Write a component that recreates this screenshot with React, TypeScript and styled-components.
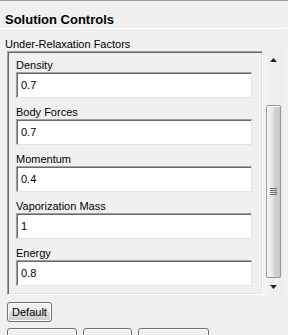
import React from "react";
import styled, { createGlobalStyle } from "styled-components";

const Global = createGlobalStyle`
  html, body { margin: 0; padding: 0; overflow: hidden; background: #f0f0f0; }
  body { font-family: "Liberation Sans", Arial, sans-serif; font-size: 11px; color: #000; }
`;

const Page = styled.div`
  width: 288px;
  height: 335px;
  overflow: hidden;
  box-sizing: border-box;
  border-top: 1px solid #a0a0a0;
  background: #f0f0f0;
  display: flex;
  flex-direction: column;
`;

const Title = styled.div`
  font-weight: bold;
  font-size: 13px;
  line-height: 16px;
  padding: 11px 0 0 5px;
  height: 16px;
`;

const Separator = styled.div`
  width: 286px;
  height: 1px;
  background: #a0a0a0;
  border-bottom: 1px solid #ffffff;
`;

const SectionLabel = styled.div`
  margin: 9px 0 0 5px;
  line-height: 13px;
  height: 13px;
`;

const Row = styled.div`
  display: flex;
  margin-left: 7px;
  height: 246px;
  gap: 2px;
`;

const GroupBox = styled.div`
  width: 256px;
  box-sizing: border-box;
  border-style: solid;
  border-width: 1px;
  border-color: #a0a0a0 #ffffff #ffffff #a0a0a0;
  box-shadow: inset 1px 1px 0 #696969, inset -1px -1px 0 #e3e3e3;
  padding: 7px 0 0 8px;
  overflow: hidden;
  display: flex;
  flex-direction: column;
  gap: 8px;
`;

const Field = styled.div`
  display: flex;
  flex-direction: column;
`;

const FieldLabel = styled.div`
  line-height: 13px;
  height: 13px;
`;

const Input = styled.div`
  width: 236px;
  height: 26px;
  box-sizing: border-box;
  border-style: solid;
  border-width: 1px;
  border-color: #a0a0a0 #e3e3e3 #e3e3e3 #a0a0a0;
  box-shadow: inset 1px 1px 0 #696969;
  background: #ffffff;
  padding: 0 0 0 4px;
  display: flex;
  align-items: center;
  font-size: 11px;
`;

const ScrollBar = styled.div`
  width: 15px;
  display: flex;
  flex-direction: column;
  background: #f0f0f0;
  border-left: 1px solid #f7f7f7;
  border-right: 1px solid #e6e6e6;
  box-sizing: content-box;
`;

const ArrowBtn = styled.div`
  height: 17px;
  display: flex;
  align-items: center;
  justify-content: center;
`;

const Track = styled.div`
  flex: 1;
  display: flex;
  flex-direction: column;
`;

const Thumb = styled.div`
  box-sizing: border-box;
  border: 1px solid #979797;
  border-radius: 2px;
  background: linear-gradient(to right, #f4f4f4 0%, #e6e6e6 45%, #d4d4d4 55%, #c8c8c8 100%);
  box-shadow: inset 1px 1px 0 #ffffff;
  display: flex;
  align-items: center;
  justify-content: center;
`;

const Grip = styled.div`
  display: flex;
  flex-direction: column;
  gap: 1px;
`;

const GripLine = styled.div`
  width: 7px;
  height: 1px;
  background: #6e6e6e;
`;

const Button = styled.div<{ $w: number }>`
  width: ${(p) => p.$w}px;
  height: 20px;
  box-sizing: border-box;
  border: 1px solid #707070;
  border-radius: 3px;
  background: linear-gradient(#f2f2f2 0%, #ebebeb 50%, #dddddd 50%, #cfcfcf 100%);
  box-shadow: inset 0 0 0 1px #fcfcfc;
  display: flex;
  align-items: center;
  justify-content: center;
  font-size: 11px;
  color: #000;
`;

const DefaultRow = styled.div`
  margin: 7px 0 0 7px;
  display: flex;
`;

const ButtonRow = styled.div`
  margin: 6px 0 0 7px;
  display: flex;
  gap: 6px;
`;

const fields = [
  { label: "Density", value: "0.7" },
  { label: "Body Forces", value: "0.7" },
  { label: "Momentum", value: "0.4" },
  { label: "Vaporization Mass", value: "1" },
  { label: "Energy", value: "0.8" },
];

const Up = () => (
  <svg width="7" height="4" viewBox="0 0 7 4">
    <path d="M3.5 0 L7 4 L0 4 Z" fill="#222" />
  </svg>
);
const Down = () => (
  <svg width="7" height="4" viewBox="0 0 7 4">
    <path d="M0 0 L7 0 L3.5 4 Z" fill="#222" />
  </svg>
);

export default function App() {
  const thumbTop = 37;
  const thumbHeight = 173;
  return (
    <Page>
      <Global />
      <Title>Solution Controls</Title>
      <Separator />
      <SectionLabel>Under-Relaxation Factors</SectionLabel>
      <Row>
        <GroupBox>
          {fields.map((f) => (
            <Field key={f.label}>
              <FieldLabel>{f.label}</FieldLabel>
              <Input>{f.value}</Input>
            </Field>
          ))}
        </GroupBox>
        <ScrollBar>
          <ArrowBtn>
            <Up />
          </ArrowBtn>
          <Track>
            <Thumb style={{ marginTop: thumbTop, height: thumbHeight }}>
              <Grip>
                <GripLine />
                <GripLine />
                <GripLine />
                <GripLine />
              </Grip>
            </Thumb>
          </Track>
          <ArrowBtn>
            <Down />
          </ArrowBtn>
        </ScrollBar>
      </Row>
      <DefaultRow>
        <Button $w={45}>Default</Button>
      </DefaultRow>
      <ButtonRow>
        <Button $w={70} />
        <Button $w={49} />
        <Button $w={71} />
      </ButtonRow>
    </Page>
  );
}
